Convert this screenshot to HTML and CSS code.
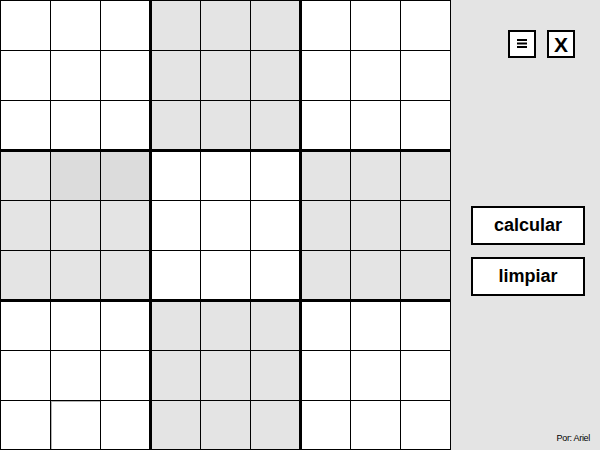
FILE: index.html
```html
<!DOCTYPE html>
<html lang="es">
<head>
<meta charset="utf-8">
<title>Sudoku</title>
<link rel="stylesheet" href="styles.css">
</head>
<body>
<div class="app">
  <div class="board">
    <div class="cell"></div><div class="cell"></div><div class="cell"></div><div class="cell g"></div><div class="cell g"></div><div class="cell g"></div><div class="cell"></div><div class="cell"></div><div class="cell"></div>
    <div class="cell"></div><div class="cell"></div><div class="cell"></div><div class="cell g"></div><div class="cell g"></div><div class="cell g"></div><div class="cell"></div><div class="cell"></div><div class="cell"></div>
    <div class="cell"></div><div class="cell"></div><div class="cell"></div><div class="cell g"></div><div class="cell g"></div><div class="cell g"></div><div class="cell"></div><div class="cell"></div><div class="cell"></div>
    <div class="cell g"></div><div class="cell g d"></div><div class="cell g d"></div><div class="cell"></div><div class="cell"></div><div class="cell"></div><div class="cell g"></div><div class="cell g"></div><div class="cell g"></div>
    <div class="cell g"></div><div class="cell g"></div><div class="cell g"></div><div class="cell"></div><div class="cell"></div><div class="cell"></div><div class="cell g"></div><div class="cell g"></div><div class="cell g"></div>
    <div class="cell g"></div><div class="cell g"></div><div class="cell g"></div><div class="cell"></div><div class="cell"></div><div class="cell"></div><div class="cell g"></div><div class="cell g"></div><div class="cell g"></div>
    <div class="cell"></div><div class="cell"></div><div class="cell"></div><div class="cell g"></div><div class="cell g"></div><div class="cell g"></div><div class="cell"></div><div class="cell"></div><div class="cell"></div>
    <div class="cell"></div><div class="cell"></div><div class="cell"></div><div class="cell g"></div><div class="cell g"></div><div class="cell g"></div><div class="cell"></div><div class="cell"></div><div class="cell"></div>
    <div class="cell"></div><div class="cell inset"></div><div class="cell"></div><div class="cell g"></div><div class="cell g"></div><div class="cell g"></div><div class="cell"></div><div class="cell"></div><div class="cell"></div>
  </div>
  <div class="panel">
    <div class="tools">
      <button class="icon-btn menu" type="button" aria-label="menú">
        <svg width="10" height="9" viewBox="0 0 10 9"><rect x="0" y="0" width="10" height="2"/><rect x="0" y="3.5" width="10" height="2"/><rect x="0" y="7" width="10" height="2"/></svg>
      </button>
      <button class="icon-btn close" type="button">X</button>
    </div>
    <div class="actions">
      <button class="action" type="button">calcular</button>
      <button class="action" type="button">limpiar</button>
    </div>
    <div class="credit">Por: Ariel</div>
  </div>
</div>
</body>
</html>
```
FILE: styles.css
```css
html, body {
  margin: 0;
  padding: 0;
  height: 100%;
}
body {
  background: #e4e4e4;
  font-family: "Liberation Sans", Arial, sans-serif;
  overflow: hidden;
}
.app {
  display: flex;
  height: 450px;
}
.board {
  display: grid;
  grid-template-columns: repeat(9, 49px);
  grid-template-rows: repeat(8, 49px) 48px;
  gap: 1px;
  padding: 1px;
  background: #000;
  width: 451px;
  height: 450px;
  box-sizing: border-box;
  flex: none;
}
.cell {
  background: #fff;
  box-sizing: border-box;
  border: 0 solid #000;
}
.cell.g { background: #e4e4e4; }
.cell.d { background: #dcdcdc; }
.cell.inset { box-shadow: inset 1px 1px 0 #b4b4b4; }
.cell:nth-child(9n+3), .cell:nth-child(9n+6) { border-right-width: 1px; }
.cell:nth-child(9n+4), .cell:nth-child(9n+7) { border-left-width: 1px; }
.cell:nth-child(n+19):nth-child(-n+27),
.cell:nth-child(n+46):nth-child(-n+54) { border-bottom-width: 1px; }
.cell:nth-child(n+28):nth-child(-n+36),
.cell:nth-child(n+55):nth-child(-n+63) { border-top-width: 1px; }

.panel {
  flex: 1;
  display: flex;
  flex-direction: column;
  padding-top: 30px;
  box-sizing: border-box;
}
.tools {
  display: flex;
  justify-content: flex-end;
  gap: 11px;
  padding-right: 25px;
}
.icon-btn {
  width: 28px;
  height: 28px;
  border: 2px solid #000;
  background: #fff;
  padding: 0;
  margin: 0;
  font-family: "Liberation Sans", Arial, sans-serif;
  font-weight: bold;
  color: #000;
  display: flex;
  align-items: center;
  justify-content: center;
  box-sizing: border-box;
}
.menu svg { display: block; fill: #000; margin-top: -2px; }
.close { font-size: 21px; line-height: 1; }
.actions {
  display: flex;
  flex-direction: column;
  gap: 12px;
  margin-top: 148px;
  padding-left: 20px;
}
.action {
  width: 114px;
  height: 39px;
  border: 2px solid #000;
  background: #fff;
  font-family: "Liberation Sans", Arial, sans-serif;
  font-weight: bold;
  font-size: 18px;
  color: #000;
  padding: 0;
  margin: 0;
  box-sizing: border-box;
}
.credit {
  margin-top: auto;
  align-self: flex-end;
  font-size: 9px;
  letter-spacing: -0.3px;
  padding: 0 10px 7px 0;
  color: #000;
}
```
